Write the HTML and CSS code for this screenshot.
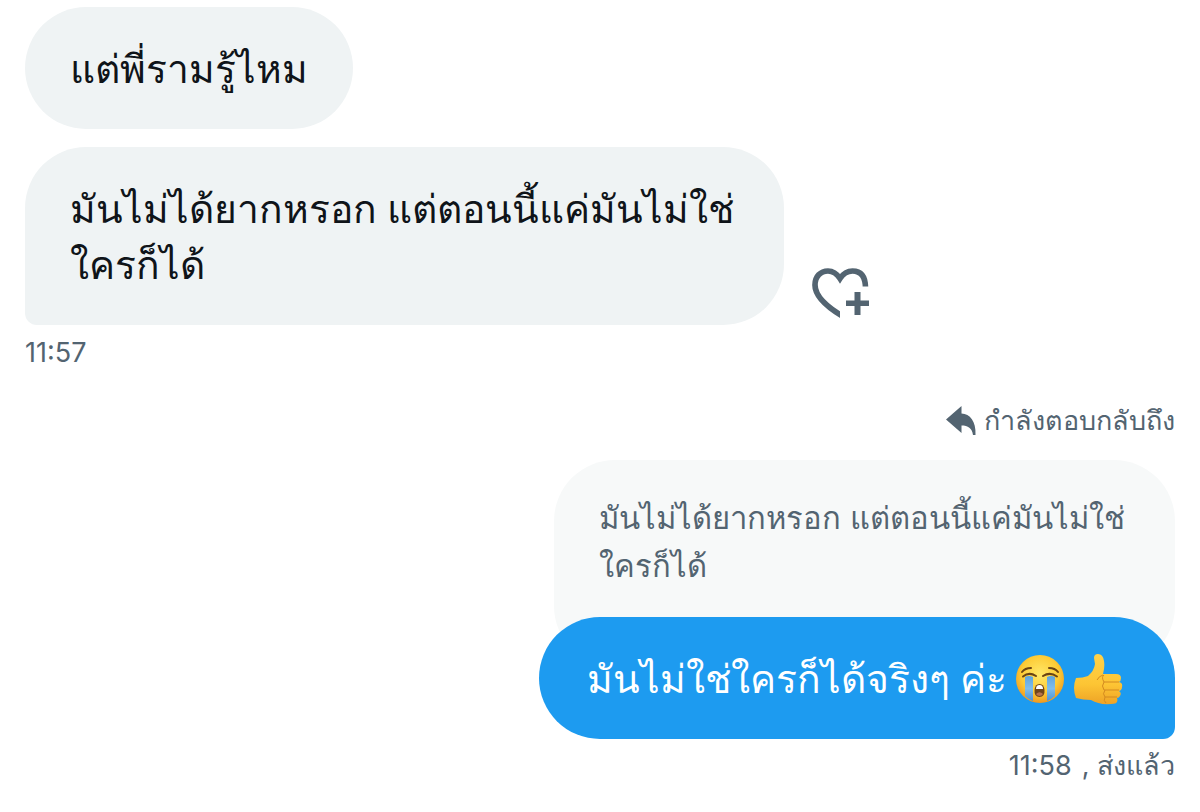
FILE: index.html
```html
<!DOCTYPE html>
<html lang="th">
<head>
	<title>ข้อความ</title>
	<meta charset="UTF-8">
	<meta name="viewport" content="width=device-width, initial-scale=1">
	<link rel="stylesheet" href="styles.css">
</head>
<body>
<main class="chat">
	<div class="row">
		<p class="bubble">แต่พี่รามรู้ไหม</p>
	</div>
	<div class="row">
		<p class="bubble tail-left">มันไม่ได้ยากหรอก แต่ตอนนี้แค่มันไม่ใช่<br>ใครก็ได้</p>
		<button class="react" type="button" aria-label="เพิ่มความรู้สึก">
			<svg viewBox="0 0 58 50" width="58" height="50">
				<clipPath id="cut"><path d="M0 0H58V18.500H28V50H0Z"/></clipPath>
				<path clip-path="url(#cut)" d="M32 49C13 38 3 28 3 17C3 8.500 8.500 3 16 3C21 3 25 6 28 10.500C31 6 35 3 40.500 3C49 3 53.500 8.500 53.500 20" fill="none" stroke="#536471" stroke-width="5.700"/>
				<path d="M42.500 24H48.500V32.500H57V38H48.500V47H42.500V38H34V32.500H42.500Z" fill="#536471"/>
			</svg>
		</button>
	</div>
	<div class="meta"><time>11:57</time></div>

	<div class="replying">
		<svg viewBox="0 0 30 30" width="30" height="30">
			<path d="M0 13.500L15.500 0V7.500C24 8 30 15 29.500 29H27C26 22 22 19.500 15.500 19.500V27Z" fill="#536471"/>
		</svg>
		<span>กำลังตอบกลับถึง</span>
	</div>
	<div class="row mine">
		<blockquote class="quote">มันไม่ได้ยากหรอก แต่ตอนนี้แค่มันไม่ใช่<br>ใครก็ได้</blockquote>
	</div>
	<div class="row mine over">
		<p class="bubble blue">
			<span>มันไม่ใช่ใครก็ได้จริงๆ ค่ะ</span>
			<svg viewBox="0 0 50 50" width="50" height="50" role="img" aria-label="ร้องไห้">
				<defs>
					<radialGradient id="face" cx="50%" cy="40%" r="60%">
						<stop offset="0" stop-color="#ffe868"/>
						<stop offset=".65" stop-color="#fdcb35"/>
						<stop offset="1" stop-color="#ee9820"/>
					</radialGradient>
					<linearGradient id="tear" x1="0" x2="0" y1="0" y2="1">
						<stop offset="0" stop-color="#5ea4dc"/>
						<stop offset=".5" stop-color="#7fbdeb"/>
						<stop offset="1" stop-color="#4b93d6"/>
					</linearGradient>
				</defs>
				<circle cx="25" cy="25" r="24" fill="url(#face)"/>
				<path d="M10 23Q14 21 18 23V47Q13 45 10 42ZM32 23Q36 21 40 23V42Q37 45 32 47Z" fill="url(#tear)"/>
				<path d="M8 22.500Q14 17.500 21 22M28 22Q35 17.500 42 22.500M7 18Q10 14 16 14M34 14Q40 14 43 18" fill="none" stroke="#6b4413" stroke-width="2" stroke-linecap="round"/>
				<path d="M19.500 36Q20 30 24.500 30Q29 30 29.500 36Q30 43 24.500 43Q19 43 19.500 36Z" fill="#70451a"/>
				<path d="M21 35Q21 31 24.500 31Q28 31 28 35Z" fill="#fff"/>
				<path d="M21 40Q24.500 36.500 28 40Q27 42 24.500 42Q22 42 21 40Z" fill="#b8734b"/>
			</svg>
			<svg viewBox="0 0 50 52" width="50" height="52" role="img" aria-label="ยกนิ้ว">
				<defs>
					<linearGradient id="hand" x1="0" x2="0" y1="0" y2="1">
						<stop offset="0" stop-color="#ffd249"/>
						<stop offset=".6" stop-color="#fdc534"/>
						<stop offset="1" stop-color="#eea326"/>
					</linearGradient>
				</defs>
				<path d="M3 25Q10 25 15 23Q21 18 22 11L21 5Q21 1 25 1Q30 1 31 8Q32 14 30 21H43Q48 21 48 25Q48 28 46 29Q50 30 49 34Q49 37 46 38Q49 40 47 43Q46 45 44 45Q46 51 38 51Q26 52 18 47Q10 47 3 45Q-1 35 3 25Z" fill="url(#hand)"/>
				<path d="M31 22Q28 24 31 29H46M31 29Q28 33 31 37H46M32 37Q29 41 32 44H44M32 44Q30 48 33 50M24 27Q26 23 30 22" fill="none" stroke="#d38a20" stroke-width="1"/>
			</svg>
		</p>
	</div>
	<div class="meta mine"><time>11:58</time><span>, ส่งแล้ว</span></div>
</main>
</body>
</html>
```

FILE: styles.css
```css
* { box-sizing: border-box; }
body
{
	margin: 0; background: #fff; color: #0f1419;
	font-family: Inter, "Noto Sans", sans-serif;
}
p, blockquote { margin: 0; }
.chat { padding: 7px 25px; }
.row { display: flex; align-items: flex-end; gap: 28px; margin-bottom: 18px; }
.bubble
{
	padding: 34px 45px 32px; border-radius: 61px; background: #eff3f4;
	font-size: 39px; line-height: 56px; font-weight: 500;
}
.tail-left { padding-right: 50px; border-bottom-left-radius: 12px; }
.react { padding: 0; margin-bottom: 7px; border: 0; background: none; cursor: pointer; }
.react svg { display: block; }
.row:has(.tail-left) { margin-bottom: 10px; }
.meta
{
	display: flex; gap: 10px; color: #536471; font-size: 27px; line-height: 36px;
}
.replying
{
	display: flex; justify-content: flex-end; align-items: center; gap: 8px;
	margin: 32px 0 21px; color: #536471; font-size: 27px; line-height: 36px;
}
.mine { justify-content: flex-end; }
.quote
{
	padding: 34px 50px 77px 45px; border-radius: 61px; background: #f7f9f9; color: #536471;
	font-size: 31px; line-height: 48px;
}
.over { position: relative; margin-top: -68px; margin-bottom: 9px; }
.blue
{
	display: flex; align-items: center; gap: 8px; padding-left: 48px; padding-right: 52px;
	border-bottom-right-radius: 12px; background: #1d9bf0; color: #fff;
}
```
